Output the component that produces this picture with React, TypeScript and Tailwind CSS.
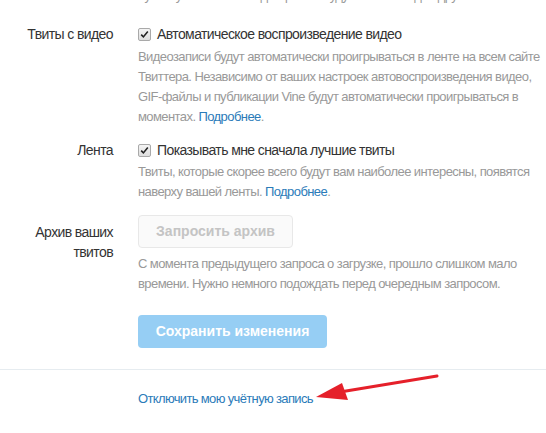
const font = { fontFamily: '"Liberation Sans", Arial, sans-serif' };

function Check() {
  return (
    <span className="inline-flex h-[13px] w-[13px] shrink-0 items-center justify-center rounded-[2px] border border-[#a9a9a9] bg-gradient-to-b from-[#f4f4f4] to-[#dedede]">
      <svg width="9" height="9" viewBox="0 0 9 9" aria-hidden="true">
        <path d="M1.2 4.6 L3.4 6.9 L7.8 1.6" fill="none" stroke="#222" strokeWidth="1.6" />
      </svg>
    </span>
  );
}

const label = "text-[14px] leading-[20px] tracking-[-0.6px] text-[#333]";
const desc = "text-[13px] leading-[20px] tracking-[-0.58px] text-[#999]";

function Row({ title, children }: { title: React.ReactNode; children: React.ReactNode }) {
  return (
    <div className="flex gap-[25px]">
      <div className={`w-[113px] shrink-0 text-right ${label}`}>{title}</div>
      <div className="min-w-0 flex-1">{children}</div>
    </div>
  );
}

export default function App() {
  return (
    <div className="relative h-[433px] w-[546px] overflow-hidden bg-white" style={font}>
      {/* хвост предыдущего блока */}
      <div className={`-mt-[14px] h-[20px] overflow-hidden whitespace-nowrap pl-[138px] ${desc}`}>
        публикуемые вами медиафайлы будут отмечены для других пользователей
      </div>

      <div className="mt-[18px] flex flex-col">
        <Row title="Твиты с видео">
          <label className={`flex items-center gap-[6px] ${label}`}>
            <Check />
            Автоматическое воспроизведение видео
          </label>
          <p className={`mt-[3px] ${desc}`}>
            Видеозаписи будут автоматически проигрываться в ленте на всем сайте
            Твиттера. Независимо от ваших настроек автовоспроизведения видео,
            GIF-файлы и публикации Vine будут автоматически проигрываться в
            моментах. <a className="text-[#2b7bb9]">Подробнее</a>.
          </p>
        </Row>

        <div className="mt-[13px]">
          <Row title="Лента">
            <label className={`flex items-center gap-[6px] ${label}`}>
              <Check />
              Показывать мне сначала лучшие твиты
            </label>
            <p className={`mt-[2px] ${desc}`}>
              Твиты, которые скорее всего будут вам наиболее интересны, появятся
              наверху вашей ленты. <a className="text-[#2b7bb9]">Подробнее</a>.
            </p>
          </Row>
        </div>

        <div className="mt-[13px]">
          <Row
            title={
              <div className="pt-[7px]">
                Архив ваших
                <br />
                твитов
              </div>
            }
          >
            <button
              disabled
              className="h-[33px] w-[155px] rounded-[4px] border border-[#e8e8e8] bg-[#fafafa] text-[14px] font-bold text-[#c4c4c4]"
            >
              Запросить архив
            </button>
            <p className={`mt-[6px] ${desc}`}>
              С момента предыдущего запроса о загрузке, прошло слишком мало
              времени. Нужно немного подождать перед очередным запросом.
            </p>
            <button
              disabled
              className="mt-[21px] h-[33px] w-[189px] rounded-[4px] bg-[#96cef4] text-[14px] font-bold text-white"
            >
              Сохранить изменения
            </button>
          </Row>
        </div>
      </div>

      <div className="mt-[21px] border-t border-[#e6ecf0]" />
      <div className="mt-[19px] pl-[138px] text-[13px] leading-[20px] tracking-[-0.65px]">
        <a className="text-[#2b7bb9]">Отключить мою учётную запись</a>
      </div>

      {/* стрелка-пометка */}
      <svg className="pointer-events-none absolute left-0 top-0" width="546" height="433" aria-hidden="true">
        <line x1="437" y1="376" x2="340" y2="392" stroke="#e5202a" strokeWidth="3" strokeLinecap="round" />
        <polygon points="316,397 342,383 348,400" fill="#e5202a" />
      </svg>
    </div>
  );
}
